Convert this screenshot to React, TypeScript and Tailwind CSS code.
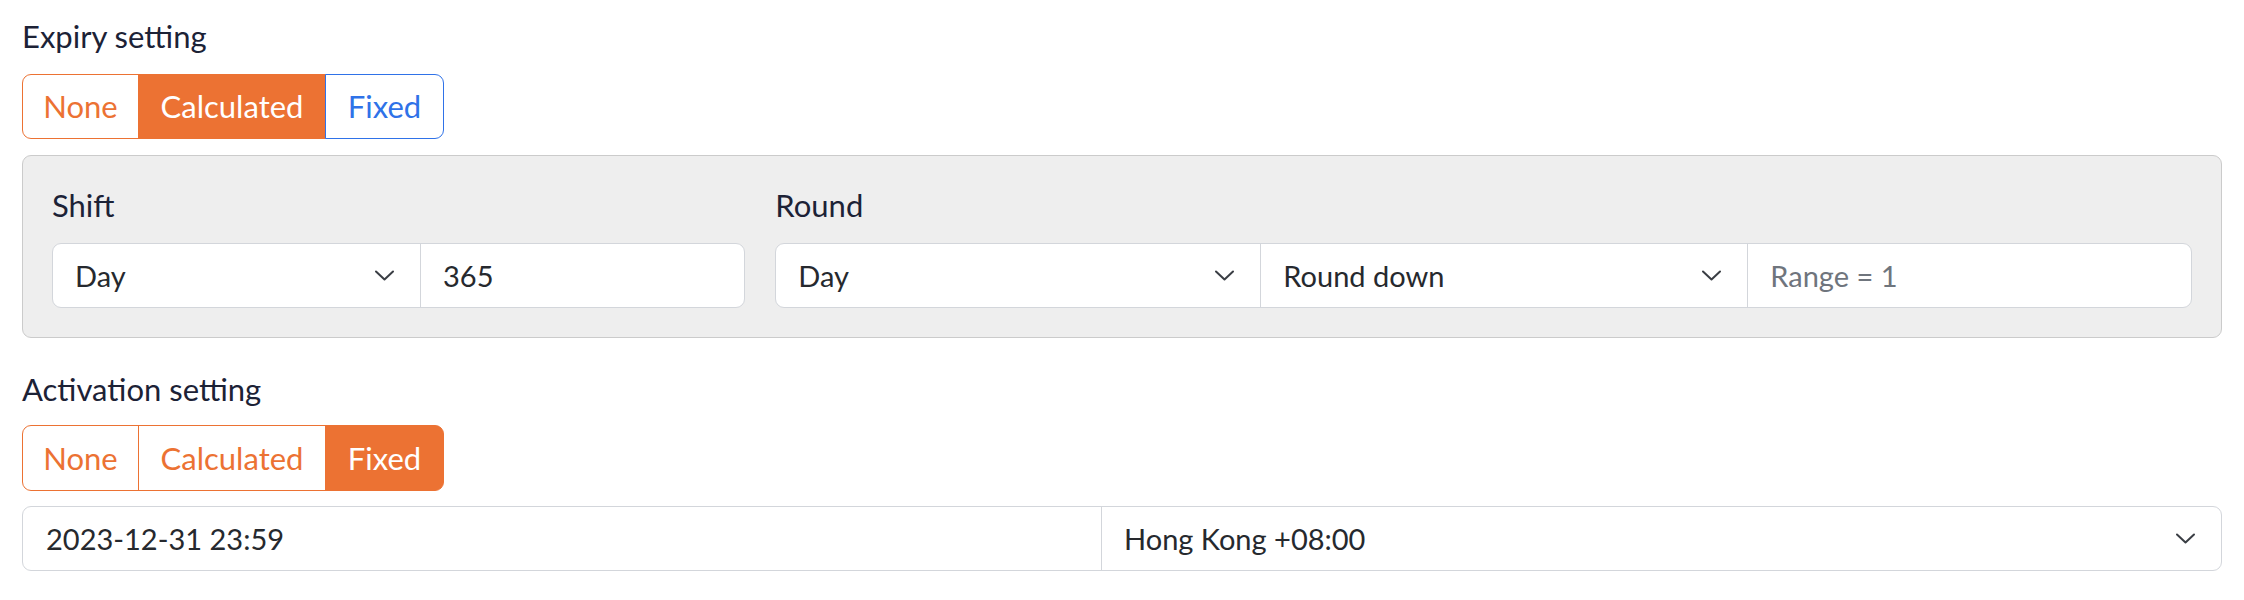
import React from "react";

function Chevron() {
  return (
    <svg width="19" height="11" viewBox="0 0 19 11" fill="none" className="shrink-0">
      <polyline points="1,1.5 9.5,9.5 18,1.5" stroke="#3a3e44" strokeWidth="2" strokeLinecap="round" strokeLinejoin="round" />
    </svg>
  );
}

function Label({ children, className = "" }: { children: React.ReactNode; className?: string }) {
  return <div className={"text-[31px] leading-[40px] text-[#1c2236] " + className}>{children}</div>;
}

function SelectBox({ value, className = "" }: { value: string; className?: string }) {
  return (
    <div className={"flex items-center justify-between pl-[22px] pr-[26px] " + className}>
      <span className="text-[29px] text-[#26292e]">{value}</span>
      <Chevron />
    </div>
  );
}

export default function App() {
  return (
    <div className="font-['Lato',sans-serif] bg-white w-[2244px] h-[600px] px-[22px] pt-[16px]">
      <Label>Expiry setting</Label>
      <div className="mt-[18px] flex h-[65px] text-[31px]">
        <div className="w-[117px] flex items-center justify-center border border-[#ec7233] rounded-l-[9px] text-[#ec7233] bg-white">None</div>
        <div className="w-[188px] flex items-center justify-center border border-[#ec7233] bg-[#ec7233] text-white -ml-px">Calculated</div>
        <div className="w-[119px] flex items-center justify-center border border-[#2f72e8] rounded-r-[9px] text-[#2f72e8] bg-white -ml-px z-10">Fixed</div>
      </div>

      <div className="mt-[16px] rounded-[9px] border border-[#cbcbcb] bg-[#eeeeee] px-[29px] pt-[29px] pb-[29px]">
        <div className="grid grid-cols-3 gap-x-[30px]">
          <div>
            <Label>Shift</Label>
            <div className="mt-[18px] flex h-[65px] rounded-[9px] border border-[#d3d6db] bg-white">
              <SelectBox value="Day" className="w-[367px] shrink-0" />
              <div className="flex-1 min-w-0 flex items-center border-l border-[#d3d6db] pl-[22px] text-[29px] text-[#26292e]">365</div>
            </div>
          </div>
          <div className="col-span-2">
            <Label>Round</Label>
            <div className="mt-[18px] flex h-[65px] rounded-[9px] border border-[#d3d6db] bg-white">
              <SelectBox value="Day" className="w-[484px] shrink-0" />
              <SelectBox value="Round down" className="w-[487px] shrink-0 border-l border-[#d3d6db]" />
              <div className="flex-1 min-w-0 flex items-center border-l border-[#d3d6db] pl-[22px] text-[29px] text-[#6f757d]">Range = 1</div>
            </div>
          </div>
        </div>
      </div>

      <Label className="mt-[31px]">Activation setting</Label>
      <div className="mt-[16px] flex h-[66px] text-[31px]">
        <div className="w-[117px] flex items-center justify-center border border-[#ec7233] rounded-l-[9px] text-[#ec7233] bg-white">None</div>
        <div className="w-[188px] flex items-center justify-center border border-[#ec7233] text-[#ec7233] bg-white -ml-px">Calculated</div>
        <div className="w-[119px] flex items-center justify-center border border-[#ec7233] rounded-r-[9px] bg-[#ec7233] text-white -ml-px">Fixed</div>
      </div>

      <div className="mt-[15px] flex h-[65px] rounded-[9px] border border-[#d3d6db] bg-white">
        <div className="w-[1078px] shrink-0 flex items-center pl-[23px] text-[29px] text-[#26292e]">2023-12-31 23:59</div>
        <SelectBox value="Hong Kong +08:00" className="flex-1 border-l border-[#d3d6db] pr-[24px]" />
      </div>
    </div>
  );
}
